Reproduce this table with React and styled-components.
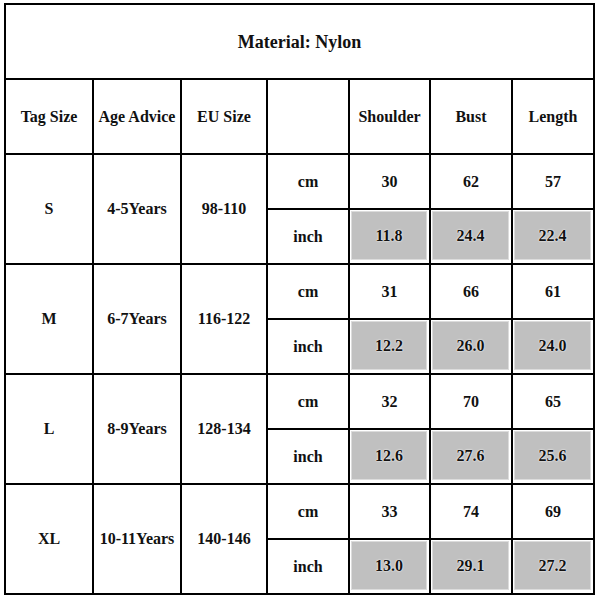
import React from 'react';
import styled, { createGlobalStyle } from 'styled-components';

const GlobalStyle = createGlobalStyle`
  html, body {
    margin: 0;
    padding: 0;
    background: #fff;
  }
  body {
    font-family: "Liberation Serif", "Times New Roman", serif;
    color: #111;
  }
`;

const Page = styled.div`
  width: 600px;
  height: 600px;
  padding: 3px 0 0 4px;
  box-sizing: border-box;
  background: #fff;
`;

const Table = styled.div`
  display: grid;
  grid-template-columns: 86px 86px 84px 80px 79px 80px 80px;
  grid-template-rows: 73px 73px repeat(8, 53px);
  gap: 2px;
  padding: 2px;
  background: #000;
  width: max-content;
`;

const Cell = styled.div`
  background: #fff;
  display: flex;
  align-items: center;
  justify-content: center;
  font-size: 16px;
  font-weight: bold;
  white-space: nowrap;
  grid-column: ${p => p.$span ? `span ${p.$span}` : 'auto'};
  grid-row: ${p => p.$rows ? `span ${p.$rows}` : 'auto'};
`;

const Title = styled(Cell)`
  font-size: 18px;
  padding-top: 2px;
`;

const Shaded = styled.div`
  background: #c0c0c0;
  align-self: stretch;
  flex: 1;
  margin: 1px 2px 3px 1px;
  border: 1px solid #dcdcdc;
  display: flex;
  align-items: center;
  justify-content: center;
  text-shadow: 0 0 2px #fff, 0 0 1px #fff;
`;

const sizes = [
  { tag: 'S', age: '4-5Years', eu: '98-110', cm: ['30', '62', '57'], inch: ['11.8', '24.4', '22.4'] },
  { tag: 'M', age: '6-7Years', eu: '116-122', cm: ['31', '66', '61'], inch: ['12.2', '26.0', '24.0'] },
  { tag: 'L', age: '8-9Years', eu: '128-134', cm: ['32', '70', '65'], inch: ['12.6', '27.6', '25.6'] },
  { tag: 'XL', age: '10-11Years', eu: '140-146', cm: ['33', '74', '69'], inch: ['13.0', '29.1', '27.2'] },
];

const headers = ['Tag Size', 'Age Advice', 'EU Size', '', 'Shoulder', 'Bust', 'Length'];

export default function App() {
  return (
    <Page>
      <GlobalStyle />
      <Table>
        <Title $span={7}>Material: Nylon</Title>
        {headers.map((h, i) => <Cell key={i}>{h}</Cell>)}
        {sizes.map(s => (
          <React.Fragment key={s.tag}>
            <Cell $rows={2}>{s.tag}</Cell>
            <Cell $rows={2}>{s.age}</Cell>
            <Cell $rows={2}>{s.eu}</Cell>
            <Cell>cm</Cell>
            {s.cm.map((v, i) => <Cell key={'c' + i}>{v}</Cell>)}
            <Cell>inch</Cell>
            {s.inch.map((v, i) => (
              <Cell key={'i' + i}><Shaded>{v}</Shaded></Cell>
            ))}
          </React.Fragment>
        ))}
      </Table>
    </Page>
  );
}
